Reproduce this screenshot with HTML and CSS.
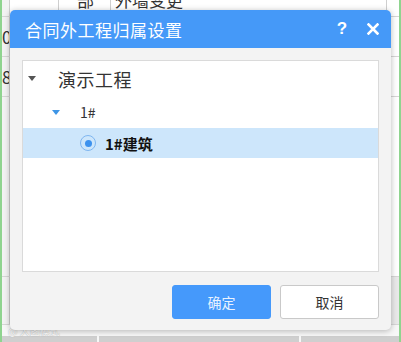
FILE: index.html
```html
<!DOCTYPE html>
<html lang="zh-CN">
<head>
    <meta charset="UTF-8">
    <meta name="viewport" content="width=device-width, initial-scale=1.0">
    <title>合同外工程归属设置</title>
    <link rel="stylesheet" href="styles.css">
</head>
<body>

    <!-- 背景表格 -->
    <div class="sheet">
        <div class="sheet-row top-row">
            <div class="cell c-num"></div>
            <div class="cell c-a"></div>
            <div class="cell c-b">部</div>
            <div class="cell c-c">外墙变更</div>
            <div class="cell c-rest"></div>
        </div>
        <div class="sheet-row">
            <div class="cell c-num">00</div>
            <div class="cell c-rest"></div>
        </div>
        <div class="sheet-row">
            <div class="cell c-num">8</div>
            <div class="cell c-rest"></div>
        </div>
        <div class="sheet-row tall">
            <div class="cell c-num"></div>
            <div class="cell c-rest"></div>
        </div>
        <div class="sheet-row dark">
            <div class="cell c-num"></div>
            <div class="cell c-rest"></div>
        </div>
        <div class="sheet-foot">
            <span class="mark">@ 大图模式</span>
            <div class="foot-seg s1"></div>
            <div class="foot-seg s2"></div>
            <div class="foot-seg s3"></div>
        </div>
    </div>

    <!-- 弹窗 -->
    <div class="dialog">
        <div class="dialog-head">
            <span class="dialog-title">合同外工程归属设置</span>
            <span class="head-btn help">?</span>
            <span class="head-btn close">
                <svg width="12" height="12" viewBox="0 0 12 12">
                    <path d="M1.5 1.5 L10.5 10.5 M10.5 1.5 L1.5 10.5" stroke="#fff" stroke-width="2.6" stroke-linecap="square"/>
                </svg>
            </span>
        </div>
        <div class="dialog-body">
            <div class="tree">
                <div class="node lv1">
                    <span class="caret"></span>
                    <span class="node-text">演示工程</span>
                </div>
                <div class="node lv2">
                    <span class="caret blue"></span>
                    <span class="node-text">1#</span>
                </div>
                <div class="node lv3 selected">
                    <span class="radio"></span>
                    <span class="node-text">1#建筑</span>
                </div>
            </div>
        </div>
        <div class="dialog-foot">
            <button class="btn primary">确定</button>
            <button class="btn">取消</button>
        </div>
    </div>

</body>
</html>
```

FILE: styles.css
```css
/* 基础 */
* {
    margin: 0;
    padding: 0;
    box-sizing: border-box;
}

body {
    width: 401px;
    height: 342px;
    overflow: hidden;
    background: #fff;
    font-family: "Noto Sans CJK SC", "Noto Sans", sans-serif;
    position: relative;
}

/* 背景表格 */
.sheet {
    height: 342px;
    border-left: 2px solid #8fd48f;
    border-right: 2px solid #8fd48f;
    display: flex;
    flex-direction: column;
    color: #333;
    font-size: 17px;
}

.sheet-row {
    display: flex;
    height: 40px;
    border-bottom: 1px solid #d6d6d6;
}

.sheet-row.top-row {
    height: 17px;
    align-items: flex-end;
}

.sheet-row.tall {
    height: 180px;
}

.sheet-row.dark {
    height: 48px;
    background: #e9e9e9;
}

.cell {
    height: 100%;
    border-right: 1px solid #cfcfcf;
    line-height: 1;
    overflow: hidden;
}

.top-row .cell {
    padding-top: 0;
    margin-top: -9px;
    height: calc(100% + 9px);
}

.c-num {
    width: 8px;
    display: flex;
    align-items: center;
    justify-content: flex-end;
    white-space: nowrap;
    direction: rtl;
    background: #f3f3f3;
}

.c-a {
    width: 49px;
}

.c-b {
    width: 52px;
    padding-left: 18px;
}

.c-c {
    width: 276px;
    padding-left: 4px;
}

.c-rest {
    flex: 1;
    border-right: none;
}

.sheet-foot {
    flex: 1;
    background: #f7f7f7;
    display: flex;
    align-items: flex-end;
    position: relative;
}

.mark {
    position: absolute;
    left: 6px;
    bottom: 4px;
    font-size: 10px;
    color: #fff;
    text-shadow: 0 0 1px #999;
}

.foot-seg {
    height: 6px;
    background: #cfcfcf;
    border-right: 2px solid #f7f7f7;
}

.s1 { width: 97px; }
.s2 { width: 202px; }
.s3 { flex: 1; border-right: none; }

/* 弹窗 */
.dialog {
    position: absolute;
    left: 10px;
    top: 10px;
    width: 381px;
    height: 320px;
    background: #f3f3f3;
    border-radius: 5px;
    box-shadow: 0 1px 6px rgba(0, 0, 0, 0.28);
    display: flex;
    flex-direction: column;
    overflow: hidden;
}

.dialog-head {
    height: 38px;
    background: #4599f8;
    color: #fff;
    display: flex;
    align-items: center;
    padding: 0 12px 0 15px;
}

.dialog-title {
    font-size: 17px;
    letter-spacing: 0.5px;
    flex: 1;
}

.head-btn {
    display: flex;
    align-items: center;
    justify-content: center;
}

.help {
    font-family: "Liberation Sans", sans-serif;
    font-weight: bold;
    font-size: 17px;
    width: 10px;
    margin-right: 20px;
}

.close {
    width: 12px;
}

.dialog-body {
    padding: 12px 12px 0 12px;
}

.tree {
    height: 212px;
    background: #fff;
    border: 1px solid #dadada;
}

.node {
    display: flex;
    align-items: center;
    color: #333;
}

.node.lv1 {
    height: 35px;
    padding-left: 5px;
}

.node.lv1 .node-text {
    font-size: 18px;
    letter-spacing: 0.5px;
    margin-left: 22px;
}

.node.lv2 {
    height: 32px;
    padding-left: 29px;
}

.node.lv2 .node-text {
    font-size: 14px;
    margin-left: 20px;
}

.node.lv3 {
    height: 30px;
    padding-left: 57px;
}

.node.lv3 .node-text {
    font-size: 15px;
    font-weight: bold;
    color: #111;
    margin-left: 9px;
}

.selected {
    background: #cde6fb;
}

.caret {
    width: 0;
    height: 0;
    border-left: 4px solid transparent;
    border-right: 4px solid transparent;
    border-top: 5px solid #555;
}

.caret.blue {
    border-top-color: #3d95e6;
}

.radio {
    width: 16px;
    height: 16px;
    border: 1.5px solid #7fb6f0;
    border-radius: 50%;
    display: flex;
    align-items: center;
    justify-content: center;
}

.radio::after {
    content: "";
    width: 7px;
    height: 7px;
    border-radius: 50%;
    background: #3d92ee;
}

/* 底部按钮 */
.dialog-foot {
    display: flex;
    justify-content: flex-end;
    gap: 9px;
    padding: 13px 12px 0 0;
}

.btn {
    width: 99px;
    height: 34px;
    font-family: "Noto Sans CJK SC", sans-serif;
    font-size: 14px;
    color: #333;
    background: #fff;
    border: 1px solid #c9c9c9;
    border-radius: 3px;
}

.btn.primary {
    background: #4599fb;
    border-color: #4599fb;
    color: #e8f2ff;
}
```
